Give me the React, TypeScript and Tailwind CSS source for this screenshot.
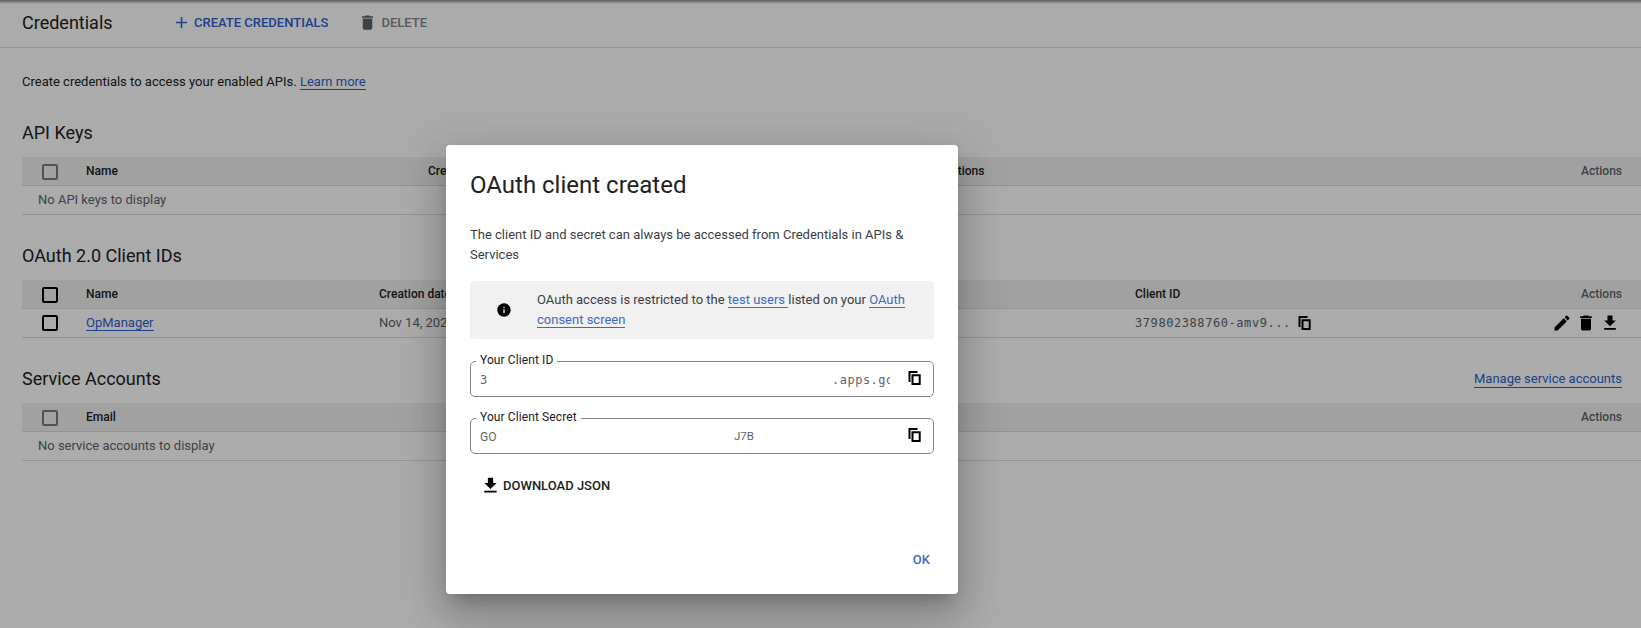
import React from "react";

const P = {
  del: "M6 19c0 1.1.9 2 2 2h8c1.1 0 2-.9 2-2V7H6v12zM19 4h-3.5l-1-1h-5l-1 1H5v2h14V4z",
  edit: "M3 17.25V21h3.75L17.81 9.94l-3.75-3.75L3 17.25zM20.71 7.04c.39-.39.39-1.02 0-1.41l-2.34-2.34c-.39-.39-1.02-.39-1.41 0l-1.83 1.83 3.75 3.75 1.83-1.83z",
  down: "M19 9h-4V3H9v6H5l7 7 7-7zM5 18v2h14v-2H5z",
  info: "M12 2C6.48 2 2 6.48 2 12s4.48 10 10 10 10-4.48 10-10S17.52 2 12 2zm1 15h-2v-6h2v6zm0-8h-2V7h2v2z",
  add: "M19 13h-6v6h-2v-6H5v-2h6V5h2v6h6v2z",
};

function Icon({ d, className }: { d: string; className: string }) {
  return (
    <svg viewBox="0 0 24 24" fill="currentColor" className={className}>
      <path d={d} />
    </svg>
  );
}

function CopyIcon({ className }: { className: string }) {
  return (
    <svg viewBox="0 0 13 14" fill="currentColor" fillRule="evenodd" className={`w-[13px] h-[14px] shrink-0 text-black ${className}`}>
      <path d="M.5 0H9.5V2H2.5V11H.5zM3.5 3.2H12.7V14H3.5zM5.5 5.2V12H10.7V5.2z" />
    </svg>
  );
}

function Check({ dim, header }: { dim?: boolean; header?: boolean }) {
  return (
    <div className={`w-[64px] shrink-0 pl-[20px] ${header ? "pt-[2px]" : ""}`}>
      <div className={`w-[16px] h-[16px] rounded-[2px] border-2 ${dim ? "border-[#7a7a7a]" : "border-black"}`} />
    </div>
  );
}

function HeaderRow({ dim, children }: { dim?: boolean; children: React.ReactNode }) {
  return (
    <div className="flex items-center h-[29px] bg-[#f1f1f1] border-b border-[#dcdcdc] text-[12px] font-medium text-[#202124] pr-[19px]">
      <Check dim={dim} header />
      {children}
      <span className="ml-auto text-[#5f6368]">Actions</span>
    </div>
  );
}

function EmptyRow({ children }: { children: React.ReactNode }) {
  return (
    <div className="flex items-center h-[29px] border-b border-[#dcdcdc] pl-[16px] text-[13px] text-[#5f6368]">
      {children}
    </div>
  );
}

function Title({ children }: { children: React.ReactNode }) {
  return <h2 className="text-[18px] leading-[24px] text-[#202124]">{children}</h2>;
}

function Field({ label, children }: { label: string; children: React.ReactNode }) {
  return (
    <div className="relative flex items-center h-[36px] rounded-[5px] border border-[#80868b] pl-[9px] pr-[12px]">
      <span className="absolute left-[5px] -top-[10px] bg-white px-[4px] text-[12px] leading-[16px] tracking-[0.1px] text-[#202124]">{label}</span>
      <div className="flex-1 min-w-0 flex items-center text-[12px] text-[#5f6368] pt-[1px]">{children}</div>
      <CopyIcon className="ml-[18px] mb-[3px]" />
    </div>
  );
}

const mono = "font-['DejaVu_Sans_Mono',monospace]";

export default function App() {
  return (
    <div className="relative h-[628px] w-[1641px] overflow-hidden bg-white font-['Roboto',sans-serif] text-[#202124]">
      <header className="flex items-center h-[48px] border-b border-[#dcdcdc] pl-[22px] pb-[2px]">
        <h1 className="w-[150px] text-[18px]">Credentials</h1>
        <button className="flex items-center gap-[3px] text-[13px] font-medium text-[#2f62c8]">
          <Icon d={P.add} className="w-[19px] h-[19px]" />
          CREATE CREDENTIALS
        </button>
        <button className="ml-[30px] flex items-center gap-[4px] text-[13px] font-medium text-[#80868b]">
          <Icon d={P.del} className="w-[19px] h-[19px] text-[#5f6368]" />
          DELETE
        </button>
      </header>

      <main className="pl-[22px] pt-[24px]">
        <p className="text-[13px] leading-[20px] mb-[29px]">
          Create credentials to access your enabled APIs.{" "}
          <a className="text-[#2f62c8] border-b border-[#2f62c8]">Learn more</a>
        </p>

        <section className="mb-[29px]">
          <div className="mb-[12px]"><Title>API Keys</Title></div>
          <HeaderRow dim>
            <span className="w-[342px]">Name</span>
            <span className="w-[492px]">Creation date</span>
            <span>Restrictions</span>
          </HeaderRow>
          <EmptyRow>No API keys to display</EmptyRow>
        </section>

        <section className="mb-[29px]">
          <div className="mb-[12px]"><Title>OAuth 2.0 Client IDs</Title></div>
          <HeaderRow>
            <span className="w-[293px]">Name</span>
            <span className="w-[756px]">Creation date</span>
            <span>Client ID</span>
          </HeaderRow>
          <div className="flex items-center h-[29px] border-b border-[#dcdcdc] pr-[21px] text-[13px]">
            <Check />
            <span className="w-[293px]"><a className="text-[#2f62c8] border-b border-[#2f62c8]">OpManager</a></span>
            <span className="w-[756px] text-[#5f6368]">Nov 14, 2024</span>
            <span className={`${mono} text-[12px] tracking-[0.57px] text-[#5f6368]`}>379802388760-amv9...</span>
            <CopyIcon className="ml-[7px] mb-[1px]" />
            <div className="ml-auto flex items-center gap-[4px] text-black">
              <Icon d={P.edit} className="w-[20px] h-[20px]" />
              <Icon d={P.del} className="w-[20px] h-[20px]" />
              <Icon d={P.down} className="w-[20px] h-[20px]" />
            </div>
          </div>
        </section>

        <section>
          <div className="flex items-center justify-between mb-[12px] pr-[19px]">
            <Title>Service Accounts</Title>
            <a className="text-[13px] leading-[17px] text-[#2f62c8] border-b border-[#2f62c8]">Manage service accounts</a>
          </div>
          <HeaderRow dim>
            <span>Email</span>
          </HeaderRow>
          <EmptyRow>No service accounts to display</EmptyRow>
        </section>
      </main>

      <div className="absolute inset-x-0 top-0 h-[4px] bg-gradient-to-b from-[#8a8a8a] to-transparent" />

      <div className="absolute inset-0 bg-black/[0.33] pl-[446px] pt-[145px]">
        <div className="flex flex-col w-[512px] h-[449px] rounded-[4px] bg-white px-[24px] pt-[24px] shadow-[0_11px_15px_-7px_rgba(0,0,0,0.2),0_24px_38px_3px_rgba(0,0,0,0.14),0_9px_46px_8px_rgba(0,0,0,0.12)]">
          <h3 className="text-[24px] leading-[32px] text-[#202124] mb-[24px]">OAuth client created</h3>
          <p className="text-[13px] leading-[20px] text-[#3c4043] mb-[16px]">
            The client ID and secret can always be accessed from Credentials in APIs &amp; Services
          </p>
          <div className="flex items-center h-[58px] rounded-[4px] bg-[#f1f1f1] mb-[22px]">
            <Icon d={P.info} className="ml-[26px] mr-[25px] shrink-0 w-[16px] h-[16px] text-black" />
            <p className="text-[13px] leading-[20px] text-[#3c4043]">
              OAuth access is restricted to the <a className="text-[#3f6ac4] border-b border-[#3f6ac4]">test users </a>
              listed on your <a className="text-[#3f6ac4] border-b border-[#3f6ac4]">OAuth consent screen</a>
            </p>
          </div>
          <div className="mb-[21px]">
            <Field label="Your Client ID">
              <span className={mono}>3</span>
              <span className={`${mono} ml-auto w-[58px] overflow-hidden whitespace-nowrap tracking-[0.5px]`}>.apps.googleusercontent.com</span>
            </Field>
          </div>
          <Field label="Your Client Secret">
            <span className="w-[17px] overflow-hidden whitespace-nowrap">GOCSPX</span>
            <span className="ml-[237px] text-[11.5px]">J7B</span>
          </Field>
          <button className="flex items-center gap-[2px] self-start ml-[10px] mt-[21px] text-[13px] font-medium text-[#202124]">
            <Icon d={P.down} className="w-[21px] h-[21px] text-black" />
            DOWNLOAD JSON
          </button>
          <button className="self-end mt-auto mb-[25px] mr-[4px] text-[13px] font-medium text-[#3f6ac4]">OK</button>
        </div>
      </div>
    </div>
  );
}
